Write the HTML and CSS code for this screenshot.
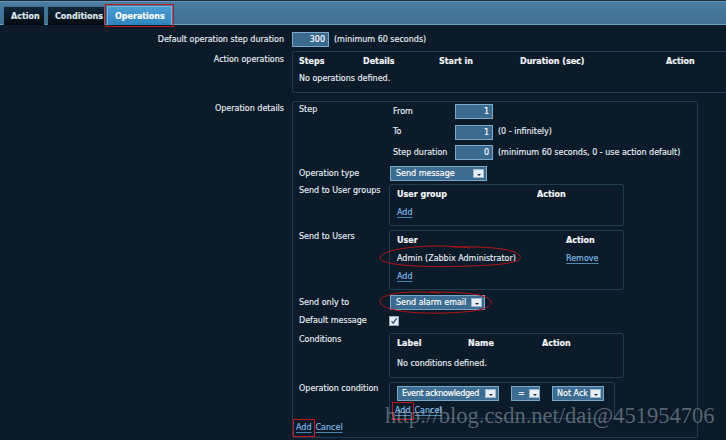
FILE: index.html
```html
<!DOCTYPE html>
<html>
<head>
<meta charset="utf-8">
<link rel="stylesheet" href="styles.css">
</head>
<body>
<div class="tabbar">
  <div class="tab">Action</div>
  <div class="tab">Conditions</div>
  <div class="tab active marked">Operations</div>
</div>
<div class="form">
  <div class="lbl l1">Default operation step duration</div>
  <div class="val v1"><span class="input w37">300</span><span class="hint">(minimum 60 seconds)</span></div>

  <div class="lbl l2">Action operations</div>
  <div class="val"><div class="box opsbox">
    <div class="thead ops"><span>Steps</span><span>Details</span><span>Start in</span><span>Duration (sec)</span><span>Action</span></div>
    <div class="empty">No operations defined.</div>
  </div></div>

  <div class="lbl l3">Operation details</div>
  <div class="val"><div class="box details">
    <div class="drow r-step">
      <div class="dl">Step</div>
      <div class="steps">
        <span class="sl">From</span><span class="input w38">1</span><span></span>
        <span class="sl">To</span><span class="input w38">1</span><span class="hint">(0 - infinitely)</span>
        <span class="sl">Step duration</span><span class="input w38">0</span><span class="hint">(minimum 60 seconds, 0 - use action default)</span>
      </div>
    </div>
    <div class="drow r-type center">
      <div class="dl">Operation type</div>
      <div class="select s-msg"><span>Send message</span><i class="arr"></i></div>
    </div>
    <div class="drow r-groups">
      <div class="dl pt">Send to User groups</div>
      <div class="box inner ug">
        <div class="thead g2"><span>User group</span><span>Action</span></div>
        <div class="linkrow"><a class="lnk">Add</a></div>
      </div>
    </div>
    <div class="drow r-users">
      <div class="dl pt">Send to Users</div>
      <div class="box inner us">
        <div class="thead g3"><span>User</span><span>Action</span></div>
        <div class="urow g3"><span>Admin (Zabbix Administrator)</span><a class="lnk">Remove</a></div>
        <div class="linkrow"><a class="lnk">Add</a></div>
      </div>
    </div>
    <div class="drow r-only center">
      <div class="dl">Send only to</div>
      <div class="select s-only"><span>Send alarm email</span><i class="arr"></i></div>
    </div>
    <div class="drow r-def center">
      <div class="dl">Default message</div>
      <div class="check"><svg width="8" height="8" viewBox="0 0 8 8"><path d="M1.5 4.2 L3.2 6.2 L6.6 1.4" fill="none" stroke="#2d4f6c" stroke-width="1.3"/></svg></div>
    </div>
    <div class="drow r-cond">
      <div class="dl pt">Conditions</div>
      <div class="box inner cd">
        <div class="thead g4"><span>Label</span><span>Name</span><span>Action</span></div>
        <div class="empty2">No conditions defined.</div>
      </div>
    </div>
    <div class="drow r-opc">
      <div class="dl pt">Operation condition</div>
      <div class="box inner oc">
        <div class="sels">
          <div class="select s-ev"><span>Event acknowledged</span><i class="arr"></i></div>
          <div class="select s-eq"><span>=</span><i class="arr"></i></div>
          <div class="select s-na"><span>Not Ack</span><i class="arr"></i></div>
        </div>
        <div class="btns b-inner"><a class="lnk marked">Add</a><a class="lnk">Cancel</a></div>
      </div>
    </div>
    <div class="btns b-outer"><a class="lnk marked">Add</a><a class="lnk">Cancel</a></div>
  </div></div>
</div>

<span class="wm">http://blog.csdn.net/dai@451954706</span>

<svg class="ink" width="726" height="440" viewBox="0 0 726 440">
  <path d="M470 248 C430 243 385 248 380 257 C377 265 420 268 470 266 C505 265 523 262 520 256 C517 250 495 246 452 247" fill="none" stroke="#b0141c" stroke-width="1"/>
  <path d="M440 293 C405 290 381 294 380 301 C379 310 410 314 445 313 C475 312 492 309 491 302 C490 295 470 292 430 292" fill="none" stroke="#b0141c" stroke-width="1"/>
</svg>
</body>
</html>
```

FILE: styles.css
```css
html, body {
  margin: 0;
  padding: 0;
}
body {
  width: 726px;
  height: 440px;
  overflow: hidden;
  background: #0b1b2a;
  color: #e6edf2;
  font-family: "DejaVu Sans", Verdana, sans-serif;
  font-size: 8px;
  line-height: 12px;
  position: relative;
  -webkit-text-stroke: 0.15px currentColor;
}

/* tab bar */
.tabbar {
  height: 25px;
  box-sizing: border-box;
  border-top: 1px solid #1c2b36;
  box-shadow: inset 0 1px 0 #6796b8, inset 0 -1px 0 #6a9ec2;
  background: linear-gradient(#4a7ea3, #3e6e92);
  display: flex;
  align-items: flex-end;
  padding-left: 3px;
  gap: 2px;
}
.tab {
  height: 19px;
  line-height: 19px;
  box-sizing: border-box;
  padding: 0 7px;
  font-weight: bold;
  color: #dfe8ef;
  background: linear-gradient(#13283a, #030a10);
  border: 1px solid #426f90;
  border-bottom: none;
  position: relative;
  text-align: center;
}
.tab:nth-child(1) { width: 42px; }
.tab:nth-child(2) { width: 58px; }
.tab.active {
  width: 65px;
  background: linear-gradient(#4b9dd3, #2f83bd);
  border-color: #79b4dc;
  color: #fff;
}
.tab.marked {
  outline: 1.5px solid #c0161e;
  outline-offset: 1px;
}

/* main form grid */
.form {
  display: grid;
  grid-template-columns: 292px 434px;
  padding-top: 7px;
  row-gap: 4px;
}
.lbl {
  text-align: right;
  padding-right: 8px;
}
.l1 { line-height: 15px; }
.l2 { padding-top: 3px; }
.l3 { padding-top: 6px; }
.v1 {
  display: flex;
  align-items: center;
  gap: 5px;
  height: 15px;
}
.input {
  display: inline-block;
  box-sizing: border-box;
  height: 15px;
  line-height: 13px;
  text-align: right;
  padding-right: 3px;
  background: #3b6a8f;
  border: 1px solid #7ea8c8;
  color: #fff;
}
.w37 { width: 37px; }
.w38 { width: 38px; }
.hint { white-space: nowrap; }

.box {
  border: 1px solid #203a4f;
  border-radius: 2px;
  box-sizing: border-box;
}
.opsbox {
  height: 42px;
  width: 450px;
  padding: 4px 6px 0;
}
.thead {
  font-weight: bold;
  color: #f4f7fa;
  display: grid;
}
.ops { grid-template-columns: 64px 76px 81px 146px auto; }
.empty { margin-top: 5px; }

.details {
  width: 406px;
  height: 337px;
  margin-top: 4px;
  padding: 2px 0 0 6px;
}
.drow {
  display: flex;
  align-items: flex-start;
}
.drow.center { align-items: center; }
.dl {
  width: 90px;
  flex: none;
  white-space: nowrap;
}
.dl.pt { padding-top: 1px; }
.r-step .dl { padding-top: 0; }
.steps {
  display: grid;
  grid-template-columns: 62px 43px auto;
  grid-auto-rows: 15px;
  row-gap: 5.5px;
  align-items: center;
  padding-left: 4px;
}
.r-type { margin-top: 6px; }
.r-groups { margin-top: 3px; }
.r-users { margin-top: 4px; }
.r-only { margin-top: 5px; }
.r-def { margin-top: 6px; height: 10px; }
.r-cond { margin-top: 7px; }
.r-opc { margin-top: 4px; }

.select {
  box-sizing: border-box;
  height: 15px;
  background: #3c6c91;
  border: 1px solid #7aa6c6;
  display: flex;
  align-items: center;
  justify-content: space-between;
  padding: 0 2px 0 5px;
  color: #fff;
  margin-left: 1px;
  white-space: nowrap;
  overflow: hidden;
}
.arr {
  width: 11px;
  height: 9px;
  flex: none;
  background: #e8eef2;
  border: 1px solid #9cb8cc;
  box-sizing: border-box;
  position: relative;
  -webkit-text-stroke: 0;
}
.arr::after {
  content: "";
  position: absolute;
  left: 3px;
  top: 4px;
  border-left: 2px solid transparent;
  border-right: 2px solid transparent;
  border-top: 2px solid #1b2a36;
}
.s-msg { width: 97px; }
.s-only { width: 95px; }

.inner {
  padding: 4px 0 0 7px;
}
.ug { width: 235px; height: 42px; }
.us { width: 235px; height: 60px; }
.cd { width: 235px; height: 45px; }
.oc { width: 226px; height: 37px; padding: 3px 0 0 7px; }
.g2 { grid-template-columns: 140px auto; }
.g3 { grid-template-columns: 169px auto; display: grid; }
.g4 { grid-template-columns: 71px 74px auto; }
.linkrow { margin-top: 6px; }
.urow { margin-top: 6px; }
.empty2 { margin-top: 8px; }

.lnk {
  color: #80bde8;
  text-decoration: underline;
  text-decoration-color: #4d86ad;
  text-underline-offset: 2px;
}
.lnk.marked {
  outline: 1.5px solid #c0161e;
  outline-offset: 2px;
}

.check {
  width: 10px;
  height: 10px;
  box-sizing: border-box;
  background: #e8eef3;
  border: 1px solid #8aa9c0;
  display: flex;
  align-items: center;
  justify-content: center;
}

.sels {
  display: flex;
  gap: 12px;
}
.sels .select { margin-left: 0; }
.s-ev { width: 102px; padding-left: 4px; letter-spacing: -0.35px; }
.s-eq { width: 29px; padding-left: 6px; gap: 4px; justify-content: flex-start; margin-left: 1px; }
.s-na { width: 52px; margin-left: -1px; padding-left: 4px; }

.btns {
  display: flex;
  gap: 4px;
}
.b-inner { margin-top: 4px; margin-left: -2px; }
.b-outer { margin-top: 3px; margin-left: -3px; }

.wm {
  position: absolute;
  left: 385px;
  top: 402px;
  font-family: "Liberation Serif", serif;
  font-size: 22.5px;
  line-height: 28px;
  color: rgba(200, 208, 216, 0.42);
  white-space: nowrap;
  -webkit-text-stroke: 0;
}
.ink {
  position: absolute;
  left: 0;
  top: 0;
  pointer-events: none;
}
```
